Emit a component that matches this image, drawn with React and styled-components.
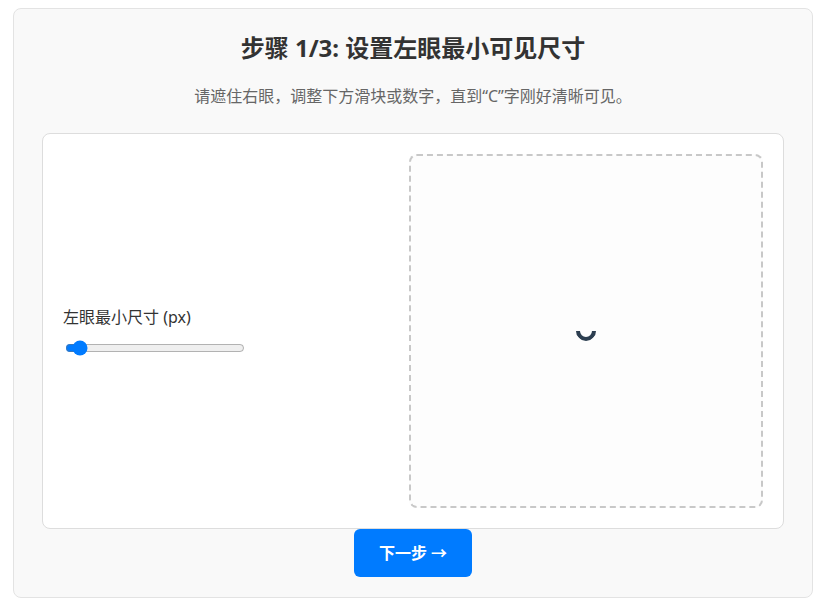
import React, { useState } from "react";
import styled, { createGlobalStyle } from "styled-components";

const GlobalStyle = createGlobalStyle`
  body {
    margin: 8px 11px 8px 13px;
    background: #fff;
    font-family: "Noto Sans", "Noto Sans CJK SC", sans-serif;
    color: #333;
  }
`;

const Card = styled.div`
  width: 800px;
  box-sizing: border-box;
  padding: 23px 28px 20px;
  background: #f9f9f9;
  border: 1px solid #e3e3e3;
  border-radius: 8px;
  display: flex;
  flex-direction: column;
  align-items: center;
`;

const Title = styled.h2`
  margin: 0;
  font-size: 24px;
  line-height: 32px;
  font-weight: 700;
  color: #333;
`;

const Subtitle = styled.p`
  margin: 20px 0 25px;
  font-size: 16px;
  line-height: 24px;
  color: #666;
`;

const Panel = styled.div`
  align-self: stretch;
  display: flex;
  align-items: center;
  padding: 20px;
  background: #fff;
  border: 1px solid #ddd;
  border-radius: 8px;
`;

const Controls = styled.div`
  flex: 1;
  display: flex;
  flex-direction: column;
  gap: 9px;
`;

const Label = styled.label`
  font-size: 16px;
  line-height: 24px;
  color: #333;
`;

const Slider = styled.input`
  width: 180px;
  margin: 2px;
  accent-color: #007bff;
`;

const Preview = styled.div`
  width: 354px;
  height: 354px;
  box-sizing: border-box;
  border: 2px dashed #c8c8c8;
  border-radius: 8px;
  background: #fdfdfd;
  display: flex;
  align-items: center;
  justify-content: center;
`;

const Spinner = styled.div`
  width: 20px;
  height: 20px;
  box-sizing: border-box;
  border-radius: 50%;
  border: 4px solid transparent;
  border-bottom-color: #2c3e50;
  border-left-color: #2c3e50;
  transform: rotate(-45deg);
`;

const NextButton = styled.button`
  padding: 12px 25px;
  border: none;
  border-radius: 6px;
  background: #007bff;
  color: #fff;
  font-family: inherit;
  font-size: 16px;
  line-height: 24px;
  font-weight: 700;
  cursor: pointer;

  &:hover {
    background: #0069d9;
  }
`;

const App = () => {
  const [size, setSize] = useState(5);

  return (
    <>
      <GlobalStyle />
      <Card>
        <Title>步骤 1/3: 设置左眼最小可见尺寸</Title>
        <Subtitle>请遮住右眼，调整下方滑块或数字，直到“C”字刚好清晰可见。</Subtitle>
        <Panel>
          <Controls>
            <Label htmlFor="left-size">左眼最小尺寸 (px)</Label>
            <Slider
              id="left-size"
              type="range"
              min="1"
              max="100"
              value={size}
              onChange={(e) => setSize(Number(e.target.value))}
            />
          </Controls>
          <Preview>
            <Spinner />
          </Preview>
        </Panel>
        <NextButton>下一步 →</NextButton>
      </Card>
    </>
  );
};

export default App;
